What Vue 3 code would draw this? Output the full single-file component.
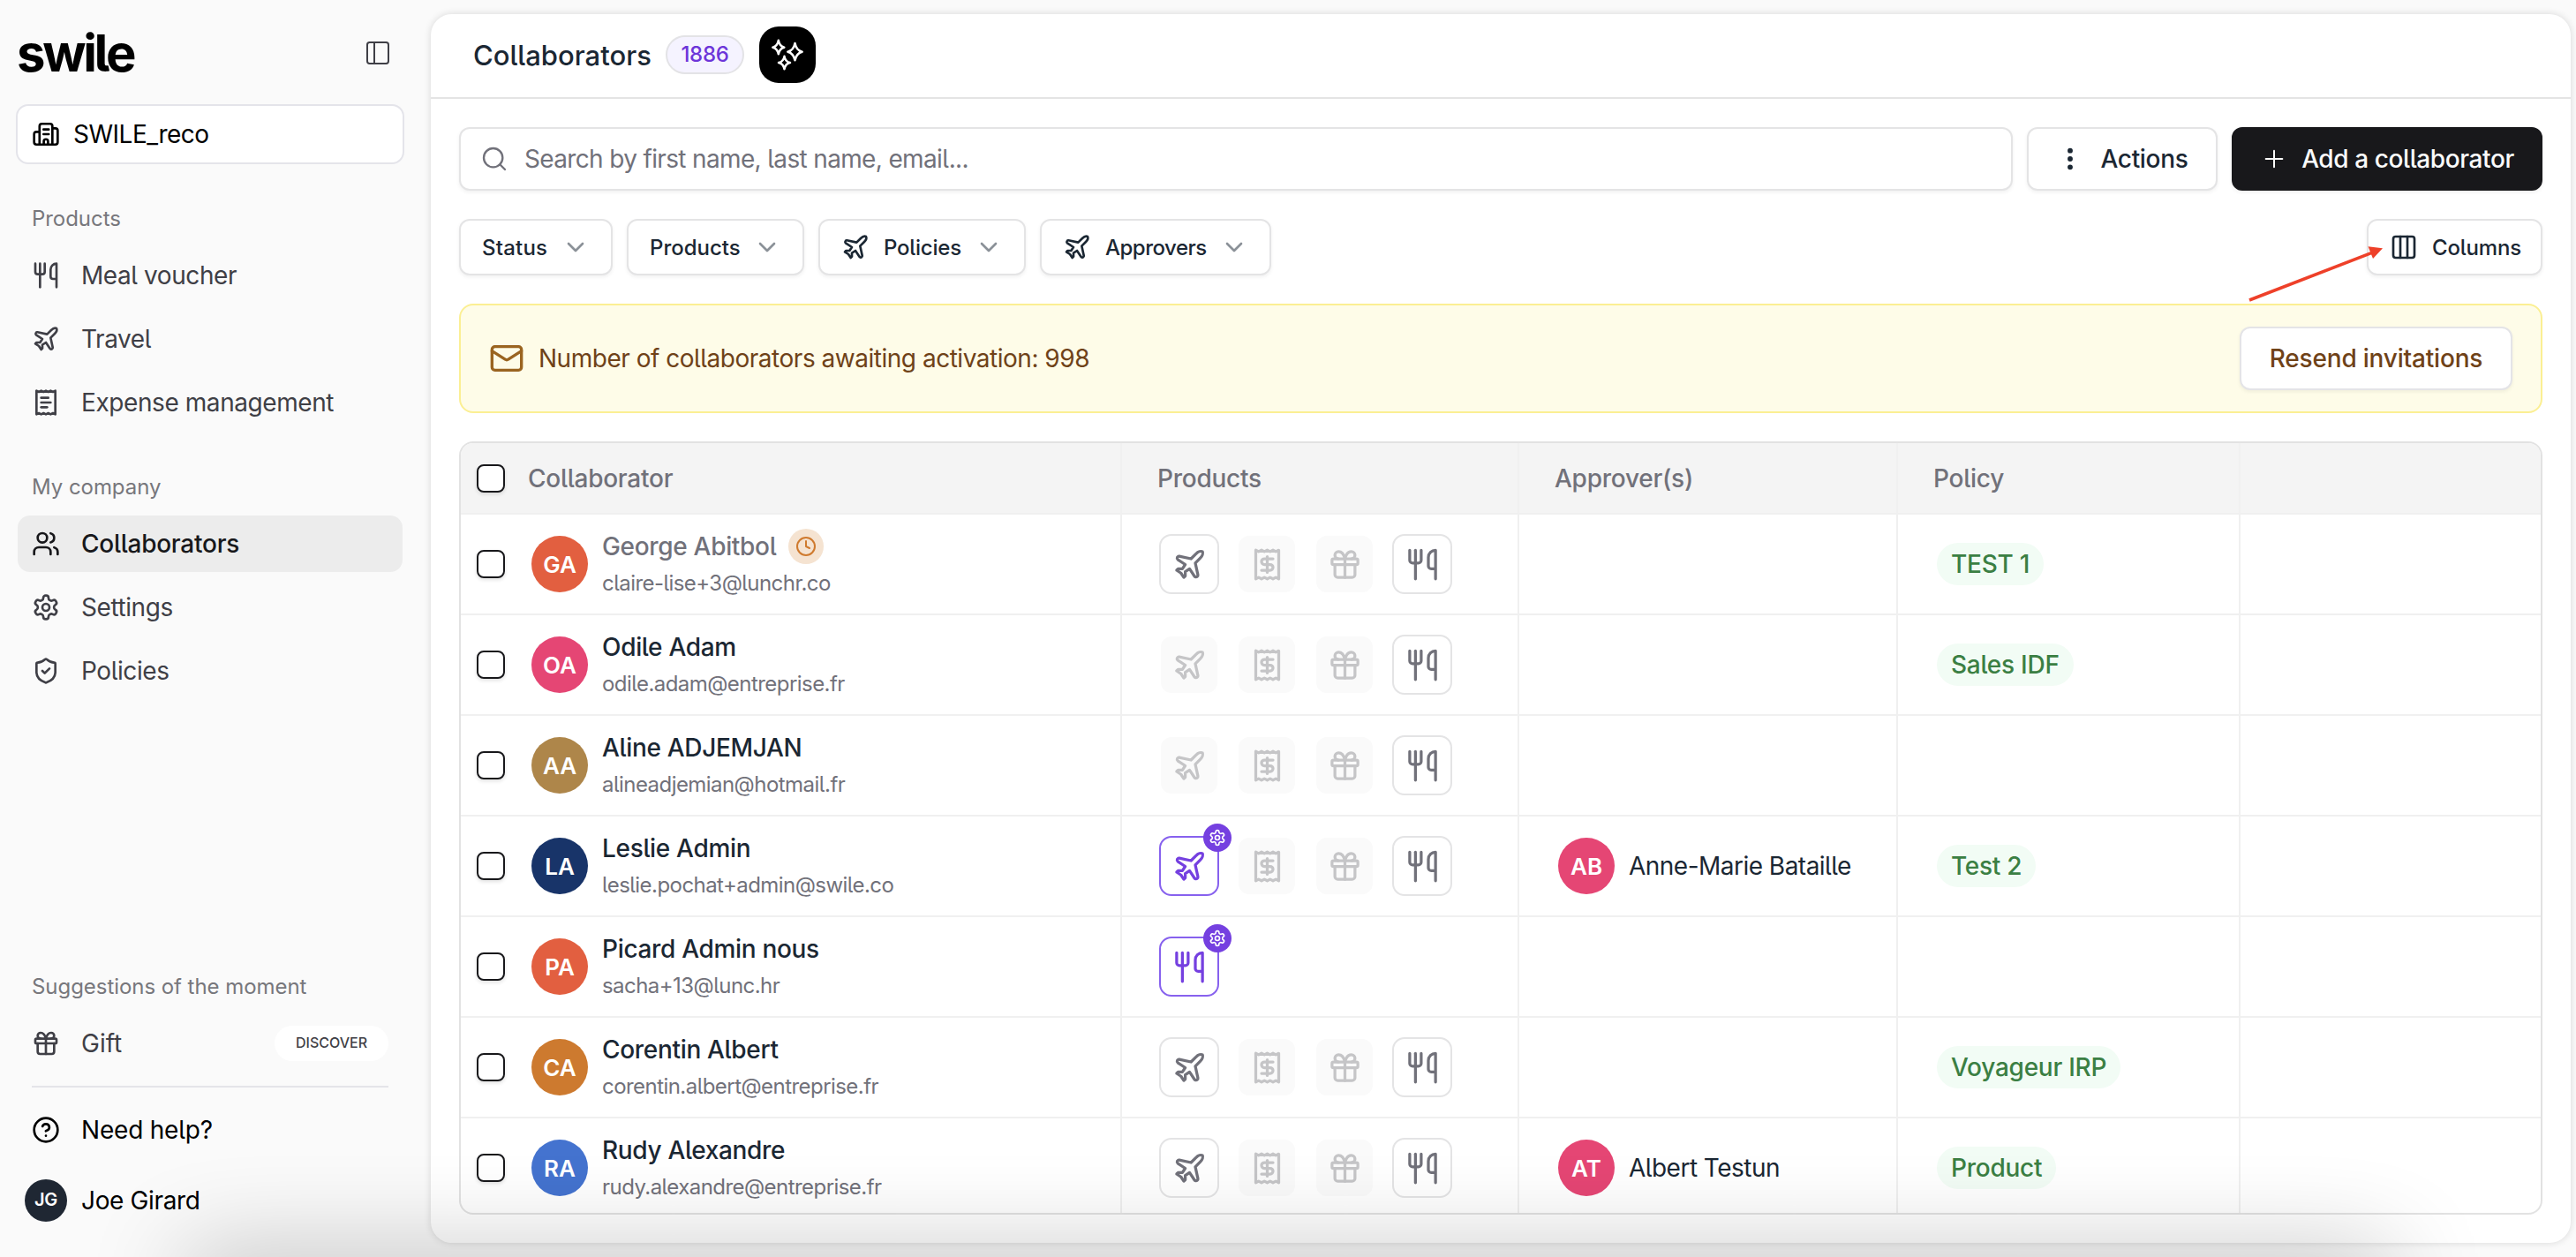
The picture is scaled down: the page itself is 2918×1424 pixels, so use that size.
<template>
  <div class="app">
    <aside class="sidebar">
      <div class="brand">
        <span class="logo">swile</span>
        <Icon name="panel" class="i32 thin toggle" />
      </div>
      <div class="company">
        <Icon name="office" class="i32" />
        <span class="company-name">SWILE_reco</span>
      </div>

      <template v-for="group in menu" :key="group.title">
        <h4 class="group">{{ group.title }}</h4>
        <nav class="nav">
          <a v-for="item in group.items" :key="item.label" class="nav-item" :class="{ active: item.active }">
            <Icon :name="item.icon" class="i32" />
            <span>{{ item.label }}</span>
          </a>
        </nav>
      </template>

      <div class="bottom">
        <h4 class="group">Suggestions of the moment</h4>
        <a class="nav-item gift">
          <Icon name="gift" class="i32" />
          <span>Gift</span>
          <span class="discover">DISCOVER</span>
        </a>
        <hr class="divider" />
        <a class="nav-item dark">
          <Icon name="help" class="i32" />
          <span>Need help?</span>
        </a>
        <div class="user">
          <span class="user-avatar">JG</span>
          <span class="user-name">Joe Girard</span>
        </div>
      </div>
    </aside>

    <main class="panel">
      <header class="header">
        <h1>Collaborators</h1>
        <span class="count">1886</span>
        <button class="ai"><Icon name="sparkles" class="ai-icon" /></button>
      </header>

      <div class="content">
        <div class="toolbar">
          <div class="search">
            <Icon name="search" class="i32 mid" />
            <span>Search by first name, last name, email...</span>
          </div>
          <button class="btn actions"><Icon name="dots" class="i32" /><span>Actions</span></button>
          <button class="btn primary"><Icon name="plus" class="i32 thin" /><span>Add a collaborator</span></button>
        </div>

        <div class="filters">
          <button v-for="f in filters" :key="f.label" class="filter" :class="'by-' + f.label.toLowerCase()">
            <Icon v-if="f.icon" :name="f.icon" class="i32" />
            <span>{{ f.label }}</span>
            <Icon name="chevron" class="i32 chevron" />
          </button>
          <button class="filter columns">
            <Icon name="columns" class="i32" />
            <span>Columns</span>
            <svg class="arrow" width="160" height="70" viewBox="0 0 160 70">
              <path d="M4 64 L142 10.6" stroke="#ee4029" stroke-width="3.6" />
              <path d="M138.5 3.3 L155 5.2 L144 17 Z" fill="#ee4029" />
            </svg>
          </button>
        </div>

        <div class="banner">
          <Icon name="mail" class="i40" />
          <span class="banner-text">Number of collaborators awaiting activation: 998</span>
          <button class="btn resend"><span>Resend invitations</span></button>
        </div>

        <div class="table">
          <div class="row head">
            <div class="cell first">
              <span class="checkbox"></span>
              <span>Collaborator</span>
            </div>
            <div class="cell"><span>Products</span></div>
            <div class="cell"><span>Approver(s)</span></div>
            <div class="cell"><span>Policy</span></div>
            <div class="cell"></div>
          </div>
          <div v-for="p in people" :key="p.email" class="row">
            <div class="cell first">
              <span class="checkbox"></span>
              <span class="avatar" :style="{ background: p.color }">{{ p.initials }}</span>
              <div class="who">
                <div class="name" :class="{ pending: p.pending }">
                  <span>{{ p.name }}</span>
                  <i v-if="p.pending" class="clock"><Icon name="clock" class="i24" /></i>
                </div>
                <div class="email">{{ p.email }}</div>
              </div>
            </div>
            <div class="cell products">
              <span v-for="(t, i) in p.products" :key="i" class="tile" :class="t.state">
                <Icon :name="t.icon" class="tile-icon" />
                <i v-if="t.state === 'admin'" class="gear"><Icon name="settings" class="i20" /></i>
              </span>
            </div>
            <div class="cell">
              <template v-if="p.approver">
                <span class="avatar pink">{{ p.approver.initials }}</span>
                <span class="approver">{{ p.approver.name }}</span>
              </template>
            </div>
            <div class="cell">
              <span v-if="p.policy" class="policy">{{ p.policy }}</span>
            </div>
            <div class="cell"></div>
          </div>
        </div>
      </div>
    </main>

    <div class="dock-shadow"></div>
  </div>
</template>

<script setup>
import { h } from 'vue'

const paths = {
  panel: '<rect x="3" y="3" width="18" height="18" rx="2"/><path d="M9 3v18"/>',
  office: '<path d="M6.6 20.8V5.2a2 2 0 0 1 2-2h6.9a2 2 0 0 1 2 2v15.6"/><path d="M6.6 10H4a2 2 0 0 0-2 2v6.8a2 2 0 0 0 2 2h16a2 2 0 0 0 2-2V9a2 2 0 0 0-2-2h-2.5"/><path d="M10 8h4.4"/><path d="M10 12h4.4"/><path d="M10.2 20.8v-2.7a1.8 1.8 0 0 1 3.6 0v2.7"/>',
  utensils: '<path d="M3 2v7c0 1.1.9 2 2 2h4a2 2 0 0 0 2-2V2"/><path d="M7 2v20"/><path d="M21 15V2a5 5 0 0 0-5 5v6c0 1.1.9 2 2 2h3Zm0 0v7"/>',
  plane: '<path d="M17.8 19.2 16 11l3.5-3.5C21 6 21.5 4 21 3c-1-.5-3 0-4.5 1.5L13 8 4.8 6.2c-.5-.1-.9.1-1.1.5l-.3.5c-.2.5-.1 1 .3 1.3L9 12l-2 3H4l-1 1 3 2 2 3 1-1v-3l3-2 3.5 5.3c.3.4.8.5 1.3.3l.5-.2c.4-.3.6-.7.5-1.2z"/>',
  receiptText: '<path d="M4 2v20l2-1 2 1 2-1 2 1 2-1 2 1 2-1 2 1V2l-2 1-2-1-2 1-2-1-2 1-2-1-2 1Z"/><path d="M14 8H8"/><path d="M16 12H8"/><path d="M13 16H8"/>',
  receipt: '<path d="M4 2v20l2-1 2 1 2-1 2 1 2-1 2 1 2-1 2 1V2l-2 1-2-1-2 1-2-1-2 1-2-1-2 1Z"/><path d="M16 8h-6a2 2 0 1 0 0 4h4a2 2 0 1 1 0 4H8"/><path d="M12 17.5v-11"/>',
  users: '<path d="M16 21v-2a4 4 0 0 0-4-4H6a4 4 0 0 0-4 4v2"/><circle cx="9" cy="7" r="4"/><path d="M22 21v-2a4 4 0 0 0-3-3.87"/><path d="M16 3.13a4 4 0 0 1 0 7.75"/>',
  settings: '<path d="M12.22 2h-.44a2 2 0 0 0-2 2v.18a2 2 0 0 1-1 1.73l-.43.25a2 2 0 0 1-2 0l-.15-.08a2 2 0 0 0-2.73.73l-.22.38a2 2 0 0 0 .73 2.73l.15.1a2 2 0 0 1 1 1.72v.51a2 2 0 0 1-1 1.74l-.15.09a2 2 0 0 0-.73 2.73l.22.38a2 2 0 0 0 2.73.73l.15-.08a2 2 0 0 1 2 0l.43.25a2 2 0 0 1 1 1.73V20a2 2 0 0 0 2 2h.44a2 2 0 0 0 2-2v-.18a2 2 0 0 1 1-1.73l.43-.25a2 2 0 0 1 2 0l.15.08a2 2 0 0 0 2.73-.73l.22-.39a2 2 0 0 0-.73-2.73l-.15-.08a2 2 0 0 1-1-1.74v-.5a2 2 0 0 1 1-1.74l.15-.09a2 2 0 0 0 .73-2.73l-.22-.38a2 2 0 0 0-2.73-.73l-.15.08a2 2 0 0 1-2 0l-.43-.25a2 2 0 0 1-1-1.73V4a2 2 0 0 0-2-2z"/><circle cx="12" cy="12" r="3"/>',
  shield: '<path d="M20 13c0 5-3.5 7.5-7.66 8.95a1 1 0 0 1-.67-.01C7.5 20.5 4 18 4 13V6a1 1 0 0 1 1-1c2 0 4.5-1.2 6.24-2.72a1.17 1.17 0 0 1 1.52 0C14.51 3.81 17 5 19 5a1 1 0 0 1 1 1z"/><path d="m9 12 2 2 4-4"/>',
  gift: '<rect x="3" y="8" width="18" height="4" rx="1"/><path d="M12 8v13"/><path d="M19 12v7a2 2 0 0 1-2 2H7a2 2 0 0 1-2-2v-7"/><path d="M7.5 8a2.5 2.5 0 0 1 0-5A4.8 8 0 0 1 12 8a4.8 8 0 0 1 4.5-5 2.5 2.5 0 0 1 0 5"/>',
  help: '<circle cx="12" cy="12" r="10"/><path d="M9.09 9a3 3 0 0 1 5.83 1c0 2-3 3-3 3"/><path d="M12 17h.01"/>',
  search: '<circle cx="11" cy="11" r="8"/><path d="m21 21-4.3-4.3"/>',
  dots: '<circle cx="12" cy="5" r="1.2"/><circle cx="12" cy="12" r="1.2"/><circle cx="12" cy="19" r="1.2"/>',
  plus: '<path d="M5 12h14"/><path d="M12 5v14"/>',
  chevron: '<path d="m6 9 6 6 6-6"/>',
  columns: '<rect x="3" y="3" width="18" height="18" rx="2"/><path d="M9 3v18"/><path d="M15 3v18"/>',
  mail: '<rect x="2" y="4" width="20" height="16" rx="2"/><path d="m22 7-8.97 5.7a1.94 1.94 0 0 1-2.06 0L2 7"/>',
  clock: '<circle cx="12" cy="12" r="10"/><path d="M12 6v6l4 2"/>',
  sparkles: '<path d="M5.9 2.2Q6.5 6.2 9.8 7Q6.5 7.8 5.9 11.6Q5.3 7.8 2 7Q5.3 6.2 5.9 2.2Z"/><path d="M17.1 4.2Q18 9 22 10Q18 11 17.1 15.8Q16.2 11 12.2 10Q16.2 9 17.1 4.2Z"/><path d="M9.9 13.1Q10.5 16.7 13.8 17.4Q10.5 18.1 9.9 21.8Q9.3 18.1 6 17.4Q9.3 16.7 9.9 13.1Z"/>'
}

const Icon = (props) => h('svg', { viewBox: '0 0 24 24', class: 'icon', innerHTML: paths[props.name] })
Icon.props = ['name']

const menu = [
  {
    title: 'Products',
    items: [
      { label: 'Meal voucher', icon: 'utensils' },
      { label: 'Travel', icon: 'plane' },
      { label: 'Expense management', icon: 'receiptText' }
    ]
  },
  {
    title: 'My company',
    items: [
      { label: 'Collaborators', icon: 'users', active: true },
      { label: 'Settings', icon: 'settings' },
      { label: 'Policies', icon: 'shield' }
    ]
  }
]

const filters = [
  { label: 'Status' },
  { label: 'Products' },
  { label: 'Policies', icon: 'plane' },
  { label: 'Approvers', icon: 'plane' }
]

// travel, expenses, gift, meal
const tiles = (travel) => [
  { icon: 'plane', state: travel },
  { icon: 'receipt', state: 'off' },
  { icon: 'gift', state: 'off' },
  { icon: 'utensils', state: 'on' }
]

const people = [
  { name: 'George Abitbol', email: 'claire-lise+3@lunchr.co', initials: 'GA', color: '#e25f40', pending: true, products: tiles('on'), policy: 'TEST 1' },
  { name: 'Odile Adam', email: 'odile.adam@entreprise.fr', initials: 'OA', color: '#e54674', products: tiles('off'), policy: 'Sales IDF' },
  { name: 'Aline ADJEMJAN', email: 'alineadjemian@hotmail.fr', initials: 'AA', color: '#ae864a', products: tiles('off') },
  { name: 'Leslie Admin', email: 'leslie.pochat+admin@swile.co', initials: 'LA', color: '#183469', products: tiles('admin'), approver: { name: 'Anne-Marie Bataille', initials: 'AB' }, policy: 'Test 2' },
  { name: 'Picard Admin nous', email: 'sacha+13@lunc.hr', initials: 'PA', color: '#e25f40', products: [{ icon: 'utensils', state: 'admin' }] },
  { name: 'Corentin Albert', email: 'corentin.albert@entreprise.fr', initials: 'CA', color: '#cd7a2f', products: tiles('on'), policy: 'Voyageur IRP' },
  { name: 'Rudy Alexandre', email: 'rudy.alexandre@entreprise.fr', initials: 'RA', color: '#4473cf', products: tiles('on'), approver: { name: 'Albert Testun', initials: 'AT' }, policy: 'Product' }
]
</script>

<style>
body {
  margin: 0;
  background: #fafafa;
}
</style>

<style scoped>
* {
  box-sizing: border-box;
}

.app {
  position: relative;
  display: flex;
  width: 2918px;
  height: 1424px;
  overflow: hidden;
  background: #fafafa;
  color: #1b2733;
  font-family: Inter, "Liberation Sans", sans-serif;
  font-size: 28px;
  font-feature-settings: "cv05";
  white-space: nowrap;
}

h1, h4 {
  margin: 0;
}

button {
  font: inherit;
  color: inherit;
  font-feature-settings: inherit;
  background: none;
  border: 0;
  padding: 0;
}

.icon {
  flex: none;
  fill: none;
  stroke: currentColor;
  stroke-width: 2;
  stroke-linecap: round;
  stroke-linejoin: round;
}
.i20 { width: 20px; height: 20px; }
.i24 { width: 24px; height: 24px; }
.i32 { width: 32px; height: 32px; }
.i40 { width: 40px; height: 40px; }
.thin { stroke-width: 1.5; }
.mid { stroke-width: 1.75; }

/* sidebar */
.sidebar {
  display: flex;
  flex-direction: column;
  width: 488px;
  padding: 24px 32px 24px 18px;
  color: #3f3f46;
}

.brand {
  display: flex;
  justify-content: space-between;
  align-items: center;
  height: 72px;
  padding: 0 12px 0 1px;
}

.logo {
  color: #000;
  font-size: 58px;
  font-weight: 700;
  letter-spacing: -3.3px;
}

.company {
  display: flex;
  align-items: center;
  gap: 15px;
  height: 68px;
  width: 440px;
  margin: 22px 0 42px;
  padding-left: 16px;
  border: 2px solid #e4e4ea;
  border-radius: 14px;
  background: #fff;
  color: #000;
  letter-spacing: -0.5px;
}

.group {
  height: 40px;
  margin-left: 18px;
  line-height: 40px;
  font-size: 24px;
  font-weight: 400;
  letter-spacing: -0.05px;
  color: #77777c;
}

.nav {
  display: flex;
  flex-direction: column;
  gap: 8px;
  margin: 12px 0 44px;
}

.nav-item {
  display: flex;
  align-items: center;
  gap: 24px;
  width: 436px;
  height: 64px;
  margin-left: 2px;
  padding: 0 16px;
  border-radius: 14px;
  letter-spacing: -0.42px;
}
.nav-item.active {
  background: #ececec;
  color: #18181b;
  font-weight: 500;
  letter-spacing: -0.25px;
}
.nav-item.gift {
  margin-top: 12px;
  letter-spacing: 0;
}
.nav-item.dark {
  color: #000;
  letter-spacing: -0.2px;
}

.bottom {
  margin-top: auto;
}

.discover {
  width: 129px;
  height: 40px;
  margin-left: auto;
  border-radius: 20px;
  background: #fff;
  line-height: 38px;
  text-align: center;
  font-size: 16px;
  font-weight: 500;
}

.divider {
  width: 404px;
  height: 2px;
  margin: 16px 0 16px 18px;
  border: 0;
  background: #e4e4e9;
}

.user {
  display: flex;
  align-items: center;
  gap: 16px;
  height: 64px;
  margin: 16px 0 8px 10px;
  color: #000;
  letter-spacing: -0.35px;
}
.user-avatar {
  width: 48px;
  height: 48px;
  border-radius: 50%;
  background: #1f2733;
  color: #fff;
  font-size: 20px;
  font-weight: 600;
  line-height: 46px;
  text-align: center;
}

/* main panel */
.panel {
  width: 2424px;
  height: 1392px;
  margin-top: 16px;
  border-radius: 24px;
  background: #fff;
  box-shadow: 0 0 8px rgba(0, 0, 0, 0.14);
}

.header {
  display: flex;
  align-items: center;
  height: 96px;
  padding: 0 0 2px 48px;
  border-bottom: 2px solid #e4e4e4;
}
.header h1 {
  width: 218px;
  font-size: 31px;
  font-weight: 500;
}

.count {
  width: 89px;
  height: 44px;
  margin-right: 17px;
  border: 2px solid #e3e3e6;
  border-radius: 22px;
  background: #f5f3ff;
  color: #6d35d9;
  font-size: 24px;
  font-weight: 500;
  line-height: 40px;
  letter-spacing: -0.3px;
  text-align: center;
}

.ai {
  display: flex;
  align-items: center;
  justify-content: center;
  width: 64px;
  height: 64px;
  border-radius: 22px;
  background: #000;
  color: #fff;
}
.ai-icon {
  width: 40px;
  height: 40px;
  stroke-width: 1.5;
}

.content {
  padding: 32px;
}

.toolbar {
  display: flex;
  gap: 16px;
  height: 72px;
}

.search,
.btn,
.filter {
  display: flex;
  align-items: center;
  border: 2px solid #e4e4e5;
  border-radius: 12px;
  background: #fff;
  box-shadow: 0 2px 4px rgba(0, 0, 0, 0.06);
}

.search {
  width: 1760px;
  padding-left: 22px;
  gap: 18px;
  color: #71717a;
  letter-spacing: -0.65px;
}

.btn {
  justify-content: center;
  font-weight: 500;
}
.actions {
  width: 216px;
  gap: 18px;
  letter-spacing: -0.3px;
}
.actions .icon {
  fill: currentColor;
}
.primary {
  width: 352px;
  gap: 15px;
  border-color: #18181b;
  background: #18181b;
  color: #fafafa;
  letter-spacing: -0.4px;
}

.filters {
  display: flex;
  gap: 16px;
  height: 64px;
  margin: 32px 0;
}
.filter {
  padding-left: 24px;
  font-size: 24px;
  font-weight: 500;
}
.filter .icon + span {
  margin-left: 16px;
}
.filter .chevron {
  margin-left: auto;
  margin-right: 24px;
  color: #8b9198;
}
.by-status {
  width: 174px;
  letter-spacing: 0.2px;
}
.by-products {
  width: 201px;
}
.by-policies {
  width: 235px;
  letter-spacing: -0.2px;
}
.by-approvers {
  width: 262px;
  letter-spacing: -0.5px;
}
.columns {
  position: relative;
  width: 199px;
  margin-left: auto;
  letter-spacing: -0.15px;
}

.arrow {
  position: absolute;
  left: -139px;
  top: 26px;
  fill: none;
}

.banner {
  display: flex;
  align-items: center;
  height: 124px;
  padding: 0 32px;
  border: 2px solid #fbef93;
  border-radius: 16px;
  background: #fefce8;
  color: #6f4218;
}
.banner .icon {
  color: #9a6420;
}
.banner-text {
  margin-left: 16px;
  letter-spacing: -0.48px;
}
.resend {
  width: 309px;
  height: 72px;
  margin-left: auto;
  border-color: #e4e4e7;
  letter-spacing: -0.2px;
}

/* table */
.table {
  height: 876px;
  margin-top: 32px;
  border: 2px solid #e2e2e2;
  border-radius: 16px;
  overflow: hidden;
}

.row {
  display: grid;
  grid-template-columns: 749px 450px 429px 388px 1fr;
  height: 114px;
  border-bottom: 2px solid #f0f0f0;
}
.row.head {
  height: 81px;
  background: #f4f4f4;
  color: #71717a;
  font-weight: 500;
  letter-spacing: -0.25px;
}

.cell {
  display: flex;
  align-items: center;
  padding-left: 40px;
  border-right: 2px solid #f0f0f0;
}
.cell:last-child {
  border-right: 0;
}
.cell.first {
  padding-left: 18px;
}

.checkbox {
  flex: none;
  width: 32px;
  height: 32px;
  margin-right: 26px;
  border: 2px solid #18181b;
  border-radius: 8px;
  background: #fff;
  box-shadow: 0 2px 4px rgba(0, 0, 0, 0.12);
}

.avatar {
  flex: none;
  width: 64px;
  height: 64px;
  margin-left: 4px;
  border-radius: 50%;
  color: #fff;
  font-size: 26px;
  font-weight: 600;
  line-height: 65px;
  text-align: center;
}
.avatar.pink {
  background: #e54674;
}

.who {
  margin-left: 16px;
  padding-top: 2px;
}
.name {
  display: flex;
  align-items: center;
  height: 42px;
  font-weight: 500;
  letter-spacing: -0.32px;
}
.name.pending {
  color: #71717a;
}
.clock {
  display: flex;
  align-items: center;
  justify-content: center;
  width: 40px;
  height: 40px;
  margin-left: 14px;
  border-radius: 50%;
  background: #f5e3d1;
  color: #cf7a2e;
}
.email {
  height: 42px;
  line-height: 42px;
  font-size: 24px;
  letter-spacing: -0.55px;
  color: #71717a;
}

.products {
  gap: 20px;
  padding-left: 42px;
}
.tile {
  position: relative;
  display: flex;
  align-items: center;
  justify-content: center;
  width: 68px;
  height: 68px;
  border: 2px solid #e4e4e5;
  border-radius: 14px;
  background: #fff;
  color: #71717a;
}
.tile-icon {
  width: 39px;
  height: 39px;
}
.tile.off {
  border-color: #fff;
  background: #fafafa;
  color: #c5c5c7;
}
.tile.admin {
  border-color: #8761ee;
  color: #7540e0;
}
.gear {
  position: absolute;
  top: -16px;
  right: -16px;
  display: flex;
  align-items: center;
  justify-content: center;
  width: 32px;
  height: 32px;
  border-radius: 50%;
  background: #7540e0;
  color: #fff;
}

.approver {
  margin-left: 16px;
  letter-spacing: -0.52px;
}

.policy {
  height: 48px;
  margin-left: 4px;
  padding: 0 16px;
  border-radius: 24px;
  background: #f2fcf5;
  color: #3b7f43;
  font-weight: 500;
  line-height: 48px;
  letter-spacing: -0.25px;
}

/* shade that rises from under the window */
.dock-shadow {
  position: absolute;
  left: 210px;
  right: 210px;
  bottom: -60px;
  height: 60px;
  box-shadow: 0 0 110px rgba(0, 0, 0, 0.3);
}
</style>
